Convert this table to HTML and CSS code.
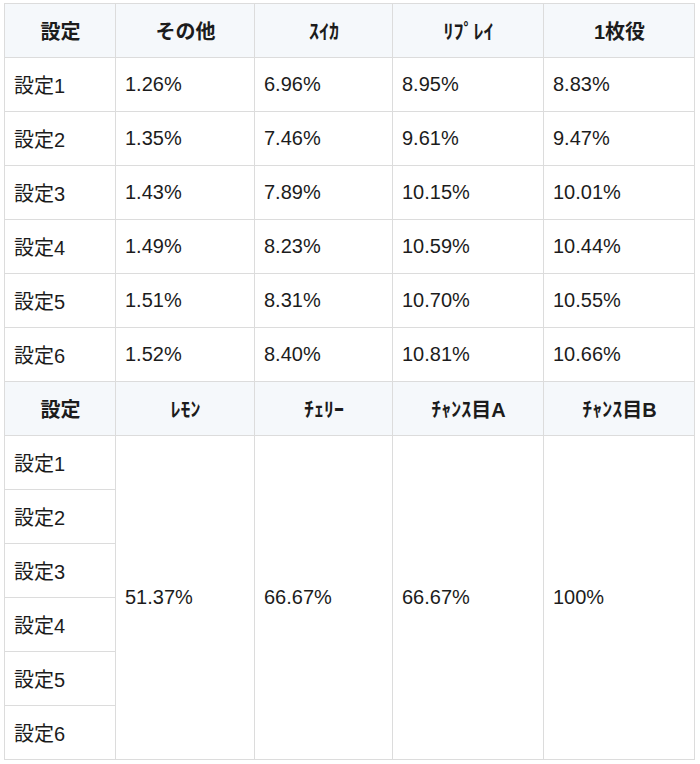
FILE: index.html
```html
<!DOCTYPE html>
<html lang="ja">
<head>
<meta charset="utf-8">
<title>設定別確率</title>
<link rel="stylesheet" href="styles.css">
</head>
<body>
<div class="wrap">
<table class="rate">
<colgroup>
<col class="c1"><col class="c2"><col class="c3"><col class="c4"><col class="c5">
</colgroup>
<thead>
<tr class="head"><th>設定</th><th>その他</th><th>ｽｲｶ</th><th>ﾘﾌﾟﾚｲ</th><th>1枚役</th></tr>
</thead>
<tbody>
<tr><td>設定1</td><td>1.26%</td><td>6.96%</td><td>8.95%</td><td>8.83%</td></tr>
<tr><td>設定2</td><td>1.35%</td><td>7.46%</td><td>9.61%</td><td>9.47%</td></tr>
<tr><td>設定3</td><td>1.43%</td><td>7.89%</td><td>10.15%</td><td>10.01%</td></tr>
<tr><td>設定4</td><td>1.49%</td><td>8.23%</td><td>10.59%</td><td>10.44%</td></tr>
<tr><td>設定5</td><td>1.51%</td><td>8.31%</td><td>10.70%</td><td>10.55%</td></tr>
<tr><td>設定6</td><td>1.52%</td><td>8.40%</td><td>10.81%</td><td>10.66%</td></tr>
<tr class="head"><th>設定</th><th>ﾚﾓﾝ</th><th>ﾁｪﾘｰ</th><th>ﾁｬﾝｽ目A</th><th>ﾁｬﾝｽ目B</th></tr>
<tr><td>設定1</td><td rowspan="6">51.37%</td><td rowspan="6">66.67%</td><td rowspan="6">66.67%</td><td rowspan="6">100%</td></tr>
<tr><td>設定2</td></tr>
<tr><td>設定3</td></tr>
<tr><td>設定4</td></tr>
<tr><td>設定5</td></tr>
<tr><td>設定6</td></tr>
</tbody>
</table>
</div>
</body>
</html>
```

FILE: styles.css
```css
html, body {
  margin: 0;
  padding: 0;
  background: #ffffff;
}

.wrap {
  padding: 3px 0 0 4px;
}

.rate {
  border-collapse: collapse;
  table-layout: fixed;
  width: 690px;
  font-family: "Liberation Sans", "Noto Sans CJK JP", sans-serif;
  font-size: 20px;
  color: #1c1c1c;
}

.c1 { width: 111px; }
.c2 { width: 139px; }
.c3 { width: 138px; }
.c4 { width: 151px; }
.c5 { width: 151px; }

.rate tr {
  height: 54px;
}

.rate th,
.rate td {
  border: 1px solid #dcdcdc;
  padding: 0 8px 0 9px;
  vertical-align: middle;
  white-space: nowrap;
}

.rate th {
  background: #f5f8fb;
  font-weight: bold;
  text-align: center;
}

.rate td {
  text-align: left;
  font-weight: normal;
}
```
